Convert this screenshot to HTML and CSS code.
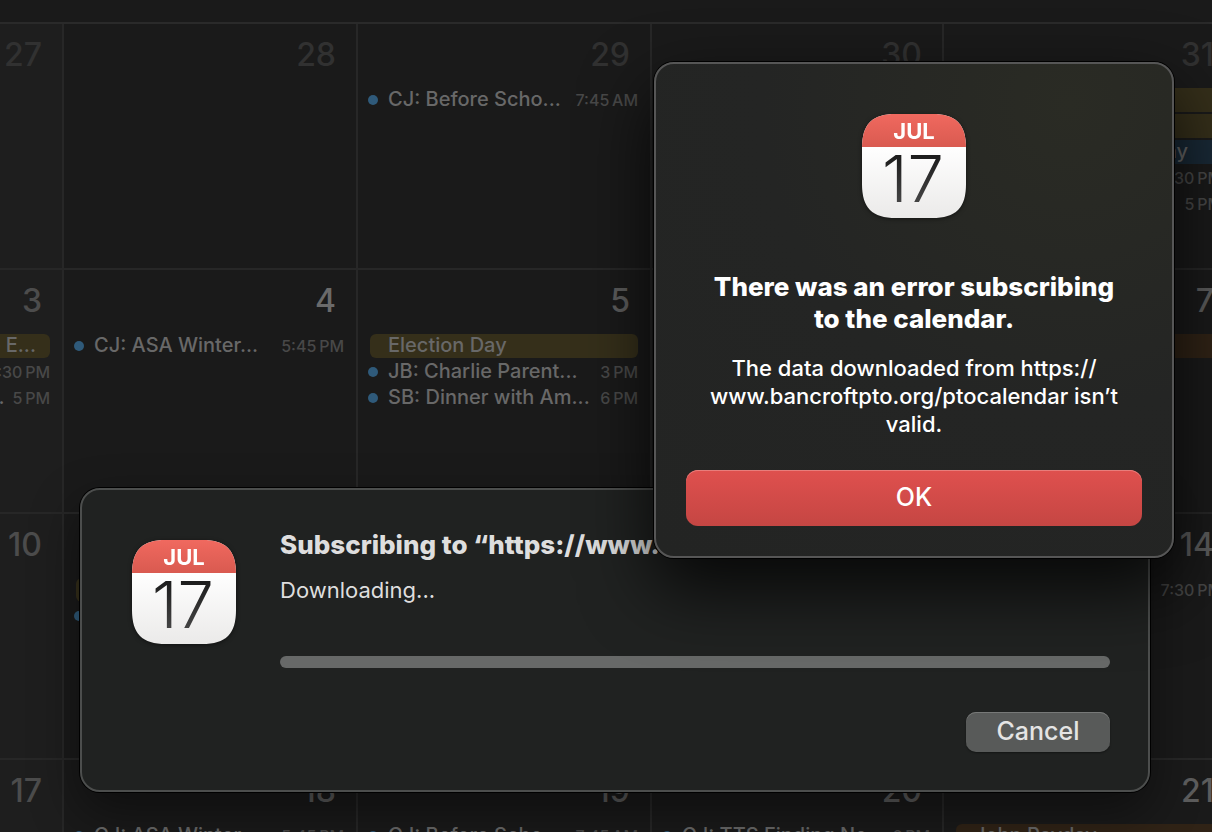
FILE: index.html
```html
<!DOCTYPE html>
<html lang="en">
<head>
    <meta charset="UTF-8">
    <meta name="viewport" content="width=device-width, initial-scale=1.0">
    <title>Calendar</title>
    <link rel="stylesheet" href="styles.css">
</head>
<body>
    <!-- calendar app icon, shared by both dialogs -->
    <svg class="defs" width="0" height="0" aria-hidden="true">
        <defs>
            <linearGradient id="red" x1="0" y1="0" x2="0" y2="1">
                <stop offset="0" stop-color="#f0695f"/>
                <stop offset="1" stop-color="#d95a50"/>
            </linearGradient>
            <linearGradient id="paper" x1="0" y1="0" x2="0" y2="1">
                <stop offset="0.3" stop-color="#ffffff"/>
                <stop offset="1" stop-color="#ebeae9"/>
            </linearGradient>
            <linearGradient id="ink" x1="0" y1="0" x2="0" y2="1">
                <stop offset="0.2" stop-color="#1c1c1c"/>
                <stop offset="0.8" stop-color="#444444"/>
            </linearGradient>
            <clipPath id="squircle">
                <path d="M34 0H70C94 0 104 10 104 34V70C104 94 94 104 70 104H34C10 104 0 94 0 70V34C0 10 10 0 34 0Z"/>
            </clipPath>
            <symbol id="calendar-icon" viewBox="0 0 104 104">
                <g clip-path="url(#squircle)">
                    <rect width="104" height="104" fill="url(#paper)"/>
                    <rect width="104" height="33" fill="url(#red)"/>
                </g>
                <text class="icon-month" x="52" y="25" text-anchor="middle">JUL</text>
                <text class="icon-day" x="51" y="88" text-anchor="middle" fill="url(#ink)">17</text>
            </symbol>
        </defs>
    </svg>

    <main class="calendar">
        <div class="day weekend old">
            <div class="number">27</div>
        </div>
        <div class="day old">
            <div class="number">28</div>
        </div>
        <div class="day old">
            <div class="number">29</div>
            <div class="event"><span class="title">CJ: Before Scho...</span><span class="time">7:45&thinsp;AM</span></div>
        </div>
        <div class="day old">
            <div class="number">30</div>
        </div>
        <div class="day old">
            <div class="number">31</div>
            <div class="bar yellow"></div>
            <div class="bar yellow"></div>
            <div class="bar blue end">ay</div>
            <div class="event"><span class="time">7:30&thinsp;PM</span></div>
            <div class="event"><span class="time">5&thinsp;PM</span></div>
        </div>

        <div class="day weekend">
            <div class="number">3</div>
            <div class="bar yellow">e E...</div>
            <div class="event"><span class="time">7:30&thinsp;PM</span></div>
            <div class="event"><span class="title">.</span><span class="time">5&thinsp;PM</span></div>
        </div>
        <div class="day current">
            <div class="number">4</div>
            <div class="event"><span class="title">CJ: ASA Winter...</span><span class="time">5:45&thinsp;PM</span></div>
        </div>
        <div class="day">
            <div class="number">5</div>
            <div class="bar yellow">Election Day</div>
            <div class="event"><span class="title">JB: Charlie Parent...</span><span class="time">3&thinsp;PM</span></div>
            <div class="event"><span class="title">SB: Dinner with Am...</span><span class="time">6&thinsp;PM</span></div>
        </div>
        <div class="day">
        </div>
        <div class="day">
            <div class="number">7</div>
            <div class="bar orange"></div>
        </div>

        <div class="day weekend">
            <div class="number">10</div>
        </div>
        <div class="day">
            <div class="number"></div>
            <div class="bar yellow"></div>
            <div class="event"></div>
        </div>
        <div class="day">
        </div>
        <div class="day">
        </div>
        <div class="day">
            <div class="number">14</div>
            <div class="event"><span class="time">7:30&thinsp;PM</span></div>
        </div>

        <div class="day weekend">
            <div class="number">17</div>
        </div>
        <div class="day">
            <div class="number">18</div>
            <div class="event"><span class="title">CJ: ASA Winter...</span><span class="time">5:45&thinsp;PM</span></div>
        </div>
        <div class="day">
            <div class="number">19</div>
            <div class="event"><span class="title">CJ: Before Scho...</span><span class="time">7:45&thinsp;AM</span></div>
        </div>
        <div class="day">
            <div class="number">20</div>
            <div class="event"><span class="title">CJ: TTS Finding No...</span><span class="time">6&thinsp;PM</span></div>
        </div>
        <div class="day">
            <div class="number">21</div>
            <div class="bar orange">John Payday</div>
        </div>
    </main>

    <section class="dialog progress-dialog" role="dialog" aria-labelledby="progress-title">
        <svg class="app-icon" viewBox="0 0 104 104" aria-hidden="true"><use href="#calendar-icon"/></svg>
        <div class="progress-body">
            <h2 id="progress-title">Subscribing to “https://www...</h2>
            <label for="download">Downloading...</label>
            <progress id="download" value="0" max="100"></progress>
            <button class="cancel" type="button">Cancel</button>
        </div>
    </section>

    <section class="dialog alert" role="alertdialog" aria-labelledby="alert-title" aria-describedby="alert-text">
        <svg class="app-icon" viewBox="0 0 104 104" aria-hidden="true"><use href="#calendar-icon"/></svg>
        <h2 id="alert-title">There was an error subscribing<br>to the calendar.</h2>
        <p id="alert-text">The data downloaded from https://<br>www.bancroftpto.org/ptocalendar isn’t<br>valid.</p>
        <button class="ok" type="button">OK</button>
    </section>
</body>
</html>
```
FILE: styles.css
```css
* { box-sizing: border-box; }
body { margin: 0; height: 100vh; position: relative; overflow: hidden; background: #1a1a1a; color: #fff; font-family: Inter, "Liberation Sans", sans-serif; }
h2, p { margin: 0; }
button { border: none; padding: 0 0 3px; font-family: inherit; font-size: 25px; font-weight: 500; cursor: pointer; }
.defs { position: absolute; }

/* month grid, runs past the right edge of the window */
.calendar { width: calc(100% + 24px); margin-top: 22px; border-top: 2px solid #2a2a2a; display: grid; grid-template-columns: 64px 294fr 294fr 292fr 292fr; grid-template-rows: 246px 244px 246px 246px; }
.day { min-width: 0; padding: 12px 12px 0; border-right: 2px solid #272727; border-bottom: 2px solid #272727; overflow: hidden; display: flex; flex-direction: column; gap: 2px; }
.weekend { background: #1e1e1e; }
.number { height: 38px; margin-bottom: 12px; padding-right: 8px; flex: none; display: flex; justify-content: flex-end; font-size: 32px; line-height: 38px; font-weight: 500; color: #5c5c5c; }
.weekend .number { color: #4c4c4c; }
.current .number { color: #6a6a6a; }
.old .number { color: #313131; }
.event { height: 24px; flex: none; display: flex; align-items: center; }
.event::before { content: ""; width: 10px; height: 10px; margin: 0 10px 0 -2px; border-radius: 50%; background: #2f5a7a; flex: none; }
.title, .bar { font-size: 20px; line-height: 22px; font-weight: 500; color: #686868; white-space: nowrap; }
.title { align-self: flex-start; }
.time { margin-left: auto; font-size: 16px; font-weight: 500; color: #484848; white-space: nowrap; }
.bar { height: 24px; flex: none; padding-left: 18px; border-radius: 6px; }
.yellow { background: #352f1a; }
.blue { background: #192936; }
.orange { background: #302316; }
.end { padding-right: 34px; text-align: right; }
.weekend .bar { margin-left: -24px; padding: 0 14px 0 0; display: flex; justify-content: flex-end; }
.weekend .event { justify-content: flex-end; gap: 8px; }
.weekend .event::before { display: none; }
.weekend .time { margin-left: 0; }

/* dialogs over the calendar */
.dialog { position: absolute; border: 2px solid #4c4e4d; border-radius: 20px; }
.dialog h2 { font-size: 26px; line-height: 32px; font-weight: 800; white-space: nowrap; }
.app-icon { width: 104px; height: 104px; flex: none; filter: drop-shadow(0 1px 2px rgba(0, 0, 0, 0.5)); }
.icon-month { font-size: 22px; font-weight: 700; fill: #fff; }
.icon-day { font-size: 65px; font-weight: 300; }

.progress-dialog { left: 80px; right: 62px; top: 488px; padding: 39px 38px 38px 50px; display: flex; gap: 44px; background: #202221; color: #dedede; box-shadow: 0 0 0 1px #000, 0 20px 50px rgba(0, 0, 0, 0.45); }
.progress-dialog .app-icon { margin-top: 11px; }
.progress-body { flex: 1; display: flex; flex-direction: column; }
.progress-body label { margin-top: 15px; font-size: 22px; line-height: 28px; }
progress { appearance: none; width: 100%; height: 12px; margin: 52px 0 44px; border: none; border-radius: 6px; overflow: hidden; background: #676968; }
progress::-webkit-progress-bar { background: #676968; }
.cancel { align-self: flex-end; width: 144px; height: 40px; border-radius: 10px; background: #585a59; color: #e4e4e4; box-shadow: inset 0 1px #777978, 0 1px 2px rgba(0, 0, 0, 0.4); }

.alert { right: 38px; top: 62px; width: 520px; padding: 50px 30px 30px; display: flex; flex-direction: column; align-items: center; text-align: center; background: radial-gradient(circle at 80% 8%, #2a2b24, #242524 50%, #232423); border-color: #565656; box-shadow: 0 0 0 1px #000, 0 30px 70px rgba(0, 0, 0, 0.8); }
.alert h2 { margin-top: 53px; }
.alert p { margin-top: 19px; font-size: 22px; line-height: 28px; font-weight: 500; white-space: nowrap; }
.ok { width: 100%; height: 56px; margin-top: 32px; border-radius: 12px; background: linear-gradient(#df504e, #c54643); color: #fff; box-shadow: inset 0 1px #e87d7b; }
```
